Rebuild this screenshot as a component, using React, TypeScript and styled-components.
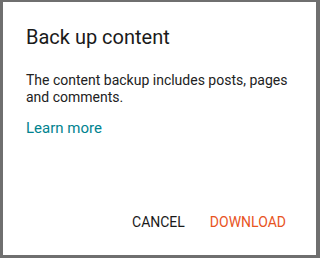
import React from 'react'
import styled, { createGlobalStyle } from 'styled-components'

const GlobalStyle = createGlobalStyle`
    html, body {
        margin: 0;
        padding: 0;
        background: #6f6f6f;
    }
    body {
        font-family: Roboto, "Liberation Sans", sans-serif;
    }
`

const App = () => {
    return (
        <>
            <GlobalStyle />
            <Frame>
                <Dialog>
                    <Title>Back up content</Title>
                    <Body>The content backup includes posts, pages and comments.</Body>
                    <Link href="#">Learn more</Link>
                    <Actions>
                        <ActionButton>CANCEL</ActionButton>
                        <ActionButton primary>DOWNLOAD</ActionButton>
                    </Actions>
                </Dialog>
            </Frame>
        </>
    )
}

export default App

const Frame = styled.div`
    width: 320px;
    height: 258px;
    box-sizing: border-box;
    padding: 2px 4px 3px 3px;
    display: flex;
`

const Dialog = styled.div`
    flex: 1;
    background: #ffffff;
    display: flex;
    flex-direction: column;
    padding: 23px 23px 0 23px;
`

const Title = styled.h2`
    margin: 0;
    font-size: 20px;
    font-weight: 400;
    line-height: 24px;
    color: #1a1a1a;
`

const Body = styled.p`
    margin: 23px 0 0;
    font-size: 14px;
    line-height: 17px;
    color: #222222;
`

const Link = styled.a`
    margin-top: 13px;
    align-self: flex-start;
    font-size: 15px;
    line-height: 18px;
    color: #00838f;
    text-decoration: none;
`

const Actions = styled.div`
    display: flex;
    justify-content: flex-end;
    gap: 25px;
    margin-top: auto;
    margin-bottom: 25px;
    padding-right: 7px;
`

const ActionButton = styled.button<{ primary?: boolean }>`
    border: none;
    background: none;
    padding: 0;
    font-family: Roboto, "Liberation Sans", sans-serif;
    font-size: 14px;
    font-weight: 400;
    line-height: 16px;
    color: ${(p) => (p.primary ? '#e8541e' : '#1a1a1a')};
    cursor: pointer;
`
